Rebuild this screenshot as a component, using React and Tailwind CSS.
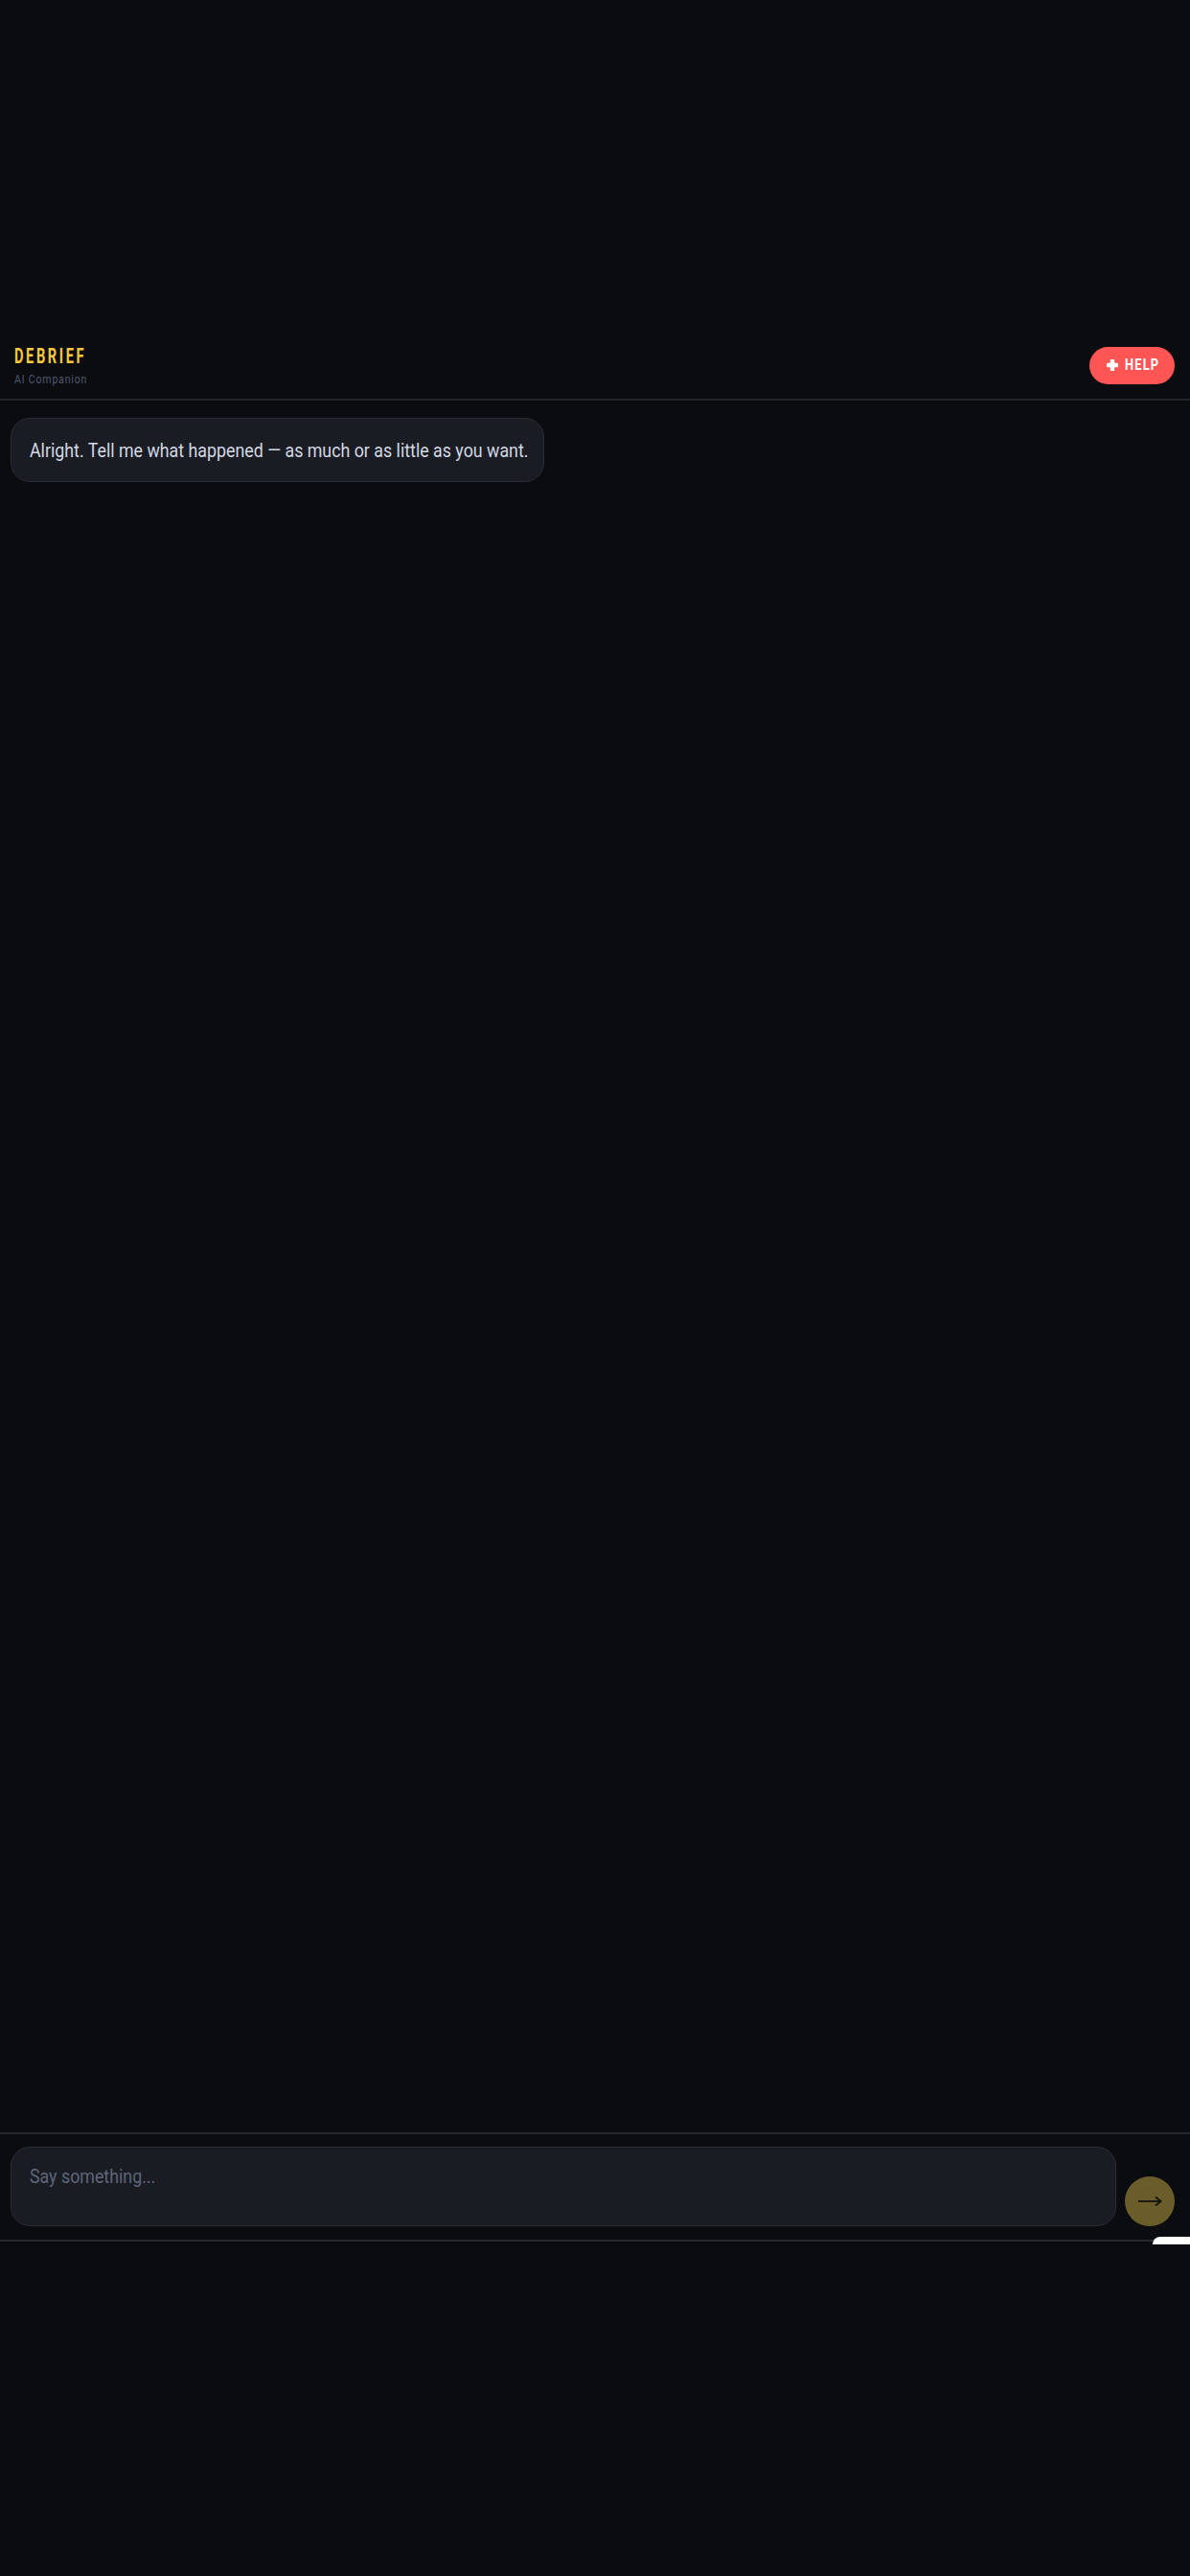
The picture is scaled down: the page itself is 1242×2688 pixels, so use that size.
import { useState } from 'react'

const App = () => {
    let [text, setText] = useState('')

    return (
        <div className="h-screen w-full bg-[#0b0c0f] flex flex-col relative overflow-hidden" style={{ fontFamily: 'Roboto, "Liberation Sans", sans-serif' }}>
            <div className="h-[346px] shrink-0"></div>

            {/* header */}
            <header className="h-[72px] shrink-0 border-b-2 border-[#22242b] pl-[15px] pr-[16px] flex items-center justify-between">
                <div className="flex flex-col whitespace-nowrap">
                    <h1 className="text-[22.5px] leading-[22px] font-bold tracking-[4px] text-[#f5c842] origin-left scale-x-[0.65]">DEBRIEF</h1>
                    <span className="text-[12.5px] leading-[14px] mt-[7px] tracking-[1px] text-[#4f5870] origin-left scale-x-[0.84]">AI Companion</span>
                </div>
                <button type="button" className="h-[39px] w-[89px] rounded-full bg-[#ff5555] flex items-center pl-[18px] text-white whitespace-nowrap">
                    <svg width="12" height="12" viewBox="0 0 12 12" fill="white">
                        <rect x="3.8" y="0" width="4.4" height="12" rx="0.8" />
                        <rect x="0" y="3.8" width="12" height="4.4" rx="0.8" />
                    </svg>
                    <span className="ml-[7px] text-[16.5px] leading-none font-bold tracking-[1.5px] origin-left scale-x-[0.78]">HELP</span>
                </button>
            </header>

            {/* messages */}
            <main className="flex-1 px-[11px] pt-[18px]">
                <div className="w-[557px] h-[67px] rounded-[20px] bg-[#1a1c23] border border-[#2a2d36] flex items-center px-[19px]">
                    <p className="text-[20px] leading-[28px] text-[#d3d8e2] whitespace-nowrap origin-left scale-x-[0.89]">Alright. Tell me what happened — as much or as little as you want.</p>
                </div>
            </main>

            {/* composer */}
            <footer className="shrink-0 border-t-2 border-[#24262d] border-b-2 border-b-[#26282f] pt-[13px] pb-[14px] pl-[11px] pr-[16px] flex items-end gap-[9px]">
                <div className="flex-1 relative">
                    <textarea
                        value={text}
                        onChange={(e) => setText(e.target.value)}
                        className="block w-full h-[83px] resize-none rounded-[20px] bg-[#1a1c23] border border-[#2a2d36] px-[19px] pt-[16px] text-[20px] leading-[28px] text-[#d3d8e2] outline-none"
                    />
                    {text === '' && (
                        <span className="absolute left-[20px] top-[17px] text-[20px] leading-[28px] text-[#5e6678] whitespace-nowrap origin-left scale-x-[0.89] pointer-events-none">Say something...</span>
                    )}
                </div>
                <button type="button" className="w-[52px] h-[52px] shrink-0 rounded-full bg-[#6a5d2a] flex items-center justify-center">
                    <svg width="26" height="12" viewBox="0 0 26 12" fill="none" stroke="#15140f" strokeWidth="1.8">
                        <line x1="1" y1="6" x2="24" y2="6" />
                        <polyline points="19,1.5 24.5,6 19,10.5" />
                    </svg>
                </button>
            </footer>
            <div className="absolute left-[1203px] top-[2334px] w-[60px] h-[8px] bg-white rounded-tl-[14px]"></div>

            <div className="h-[349px] shrink-0"></div>
        </div>
    )
}

export default App
